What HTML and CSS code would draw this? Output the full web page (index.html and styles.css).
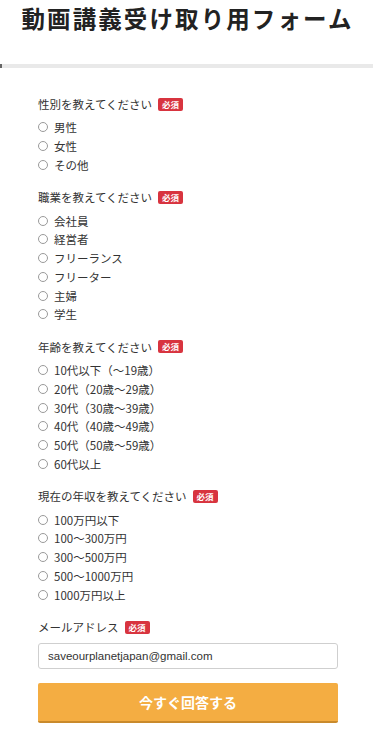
FILE: index.html
```html
<!DOCTYPE html>
<html lang="ja">
<head>
    <meta charset="UTF-8">
    <meta name="viewport" content="width=device-width, initial-scale=1.0">
    <title>動画講義受け取り用フォーム</title>
    <link rel="stylesheet" href="styles.css">
</head>
<body>
    <div class="form-header">
        <h1 class="form-title">動画講義受け取り用フォーム</h1>
    </div>
    <div class="divider"></div>

    <form class="survey-form" onsubmit="return false;">
        <div class="question">
            <div class="question-label">性別を教えてください <span class="required">必須</span></div>
            <label class="option"><input type="radio" name="gender"> 男性</label>
            <label class="option"><input type="radio" name="gender"> 女性</label>
            <label class="option"><input type="radio" name="gender"> その他</label>
        </div>

        <div class="question">
            <div class="question-label">職業を教えてください <span class="required">必須</span></div>
            <label class="option"><input type="radio" name="job"> 会社員</label>
            <label class="option"><input type="radio" name="job"> 経営者</label>
            <label class="option"><input type="radio" name="job"> フリーランス</label>
            <label class="option"><input type="radio" name="job"> フリーター</label>
            <label class="option"><input type="radio" name="job"> 主婦</label>
            <label class="option"><input type="radio" name="job"> 学生</label>
        </div>

        <div class="question">
            <div class="question-label">年齢を教えてください <span class="required">必須</span></div>
            <label class="option"><input type="radio" name="age"> 10代以下（〜19歳）</label>
            <label class="option"><input type="radio" name="age"> 20代（20歳〜29歳）</label>
            <label class="option"><input type="radio" name="age"> 30代（30歳〜39歳）</label>
            <label class="option"><input type="radio" name="age"> 40代（40歳〜49歳）</label>
            <label class="option"><input type="radio" name="age"> 50代（50歳〜59歳）</label>
            <label class="option"><input type="radio" name="age"> 60代以上</label>
        </div>

        <div class="question">
            <div class="question-label">現在の年収を教えてください <span class="required">必須</span></div>
            <label class="option"><input type="radio" name="income"> 100万円以下</label>
            <label class="option"><input type="radio" name="income"> 100〜300万円</label>
            <label class="option"><input type="radio" name="income"> 300〜500万円</label>
            <label class="option"><input type="radio" name="income"> 500〜1000万円</label>
            <label class="option"><input type="radio" name="income"> 1000万円以上</label>
        </div>

        <div class="question">
            <div class="question-label">メールアドレス <span class="required">必須</span></div>
            <input class="email-input" type="email" value="saveourplanetjapan@gmail.com">
        </div>

        <button class="submit-btn" type="submit">今すぐ回答する</button>
    </form>
</body>
</html>
```

FILE: styles.css
```css
body {
    margin: 0;
    padding: 0;
    background: #fff;
    color: #333;
    font-family: "Noto Sans CJK JP", "Noto Sans", sans-serif;
}

.form-header {
    height: 64px;
}

.form-title {
    margin: 0;
    padding-left: 2px;
    font-size: 23.5px;
    line-height: 36px;
    font-weight: bold;
    text-align: center;
    color: #222;
    letter-spacing: 2.1px;
}

.divider {
    height: 4px;
    background: #e9e9e9;
    border-left: 2px solid #666;
}

.survey-form {
    padding: 27px 35px 0 38px;
}

.question {
    margin-bottom: 14px;
}

.question-label {
    display: flex;
    align-items: center;
    gap: 6px;
    font-size: 11.5px;
    line-height: 18px;
    margin-bottom: 5px;
    color: #333;
}

.required {
    display: inline-block;
    background: #d8343f;
    color: #fff;
    font-size: 8.5px;
    font-weight: bold;
    line-height: 13px;
    padding: 0 4px;
    border-radius: 2px;
}

.option {
    display: flex;
    align-items: center;
    gap: 6px;
    height: 18.75px;
    font-size: 11.5px;
    color: #333;
}

.option input {
    appearance: none;
    -webkit-appearance: none;
    width: 10px;
    height: 10px;
    margin: 0;
    border: 1px solid #9a9a9a;
    border-radius: 50%;
    background: #fff;
    flex-shrink: 0;
}

.email-input {
    display: block;
    box-sizing: border-box;
    width: 300px;
    height: 26px;
    margin-top: 7px;
    padding: 0 9px;
    border: 1px solid #cfcfcf;
    border-radius: 3px;
    font-family: "Liberation Sans", Arial, sans-serif;
    font-size: 11.5px;
    color: #333;
}

.submit-btn {
    display: block;
    box-sizing: border-box;
    width: 300px;
    height: 40px;
    margin-top: 0;
    border: none;
    border-bottom: 2px solid #c98a2c;
    border-radius: 2px;
    background: #f4ad42;
    color: #fff;
    font-family: "Noto Sans CJK JP", sans-serif;
    font-size: 14px;
    font-weight: bold;
    cursor: pointer;
}
```
